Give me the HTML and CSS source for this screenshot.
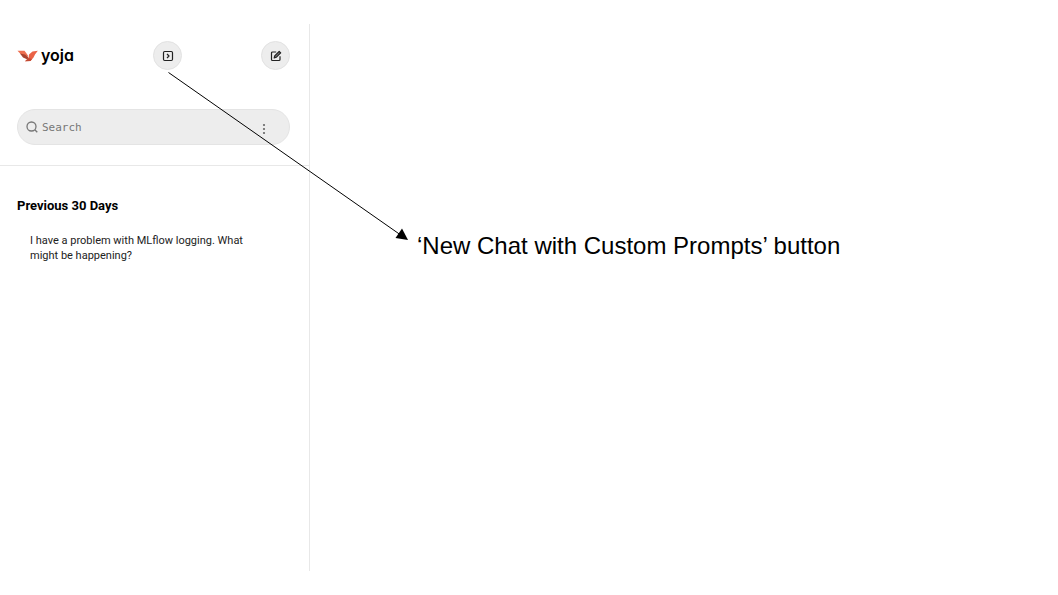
FILE: index.html
```html
<!DOCTYPE html>
<html lang="en">
<head>
<meta charset="utf-8">
<title>yoja</title>
<link rel="stylesheet" href="styles.css">
</head>
<body>
<div class="page">
  <aside class="sidebar">
    <header class="top">
      <a class="brand" href="#">
        <svg class="brand-mark" viewBox="0 0 21 12" aria-hidden="true">
          <path fill="#ee6f50" d="M.5.8H7.500L11 5.500 10 8 4 4.500z"/>
          <path fill="#a8432f" d="M3 3.500 8 4.500 11.500 7.500 10.500 9.500 6 7.500z"/>
          <path fill="#ea6246" d="M20.800.8 15.500 1.500 12 4.500 11.500 8 8 11.200 13.500 11 16.500 7.500 18 4.500z"/>
          <path fill="#c24a33" d="M11.500 8 8 11.200 13.500 11 15 9z"/>
        </svg>
        <span class="brand-name">yoja</span>
      </a>
      <button class="round" type="button" aria-label="New chat with custom prompts">
        <svg class="icon" viewBox="0 0 12 12" aria-hidden="true"><rect x="1.500" y="1.500" width="9" height="9" rx="1.200"/><path d="M5 4l2 2-2 2"/></svg>
      </button>
      <button class="round" type="button" aria-label="New chat">
        <svg class="icon" viewBox="0 0 12 12" aria-hidden="true"><path d="M6.200 2H2.500a1 1 0 0 0-1 1v6.500a1 1 0 0 0 1 1H9a1 1 0 0 0 1-1V6.200"/><path d="M4.200 8l.5-2.200L9.200 1.300l1.500 1.500-4.500 4.500z" fill="#777"/></svg>
      </button>
    </header>
    <div class="search">
      <svg class="search-icon" viewBox="0 0 12 12" aria-hidden="true"><circle cx="5.500" cy="5.500" r="4.500"/><path d="M8.800 8.800 11.300 11.300"/></svg>
      <input class="search-input" type="text" placeholder="Search" aria-label="Search">
      <button class="more" type="button" aria-label="Search options">
        <svg class="dots" viewBox="0 0 4 12" aria-hidden="true"><circle cx="2" cy="2" r="1.100"/><circle cx="2" cy="6" r="1.100"/><circle cx="2" cy="10" r="1.100"/></svg>
      </button>
    </div>
    <nav class="history">
      <h2 class="history-title">Previous 30 Days</h2>
      <a class="chat" href="#">I have a problem with MLflow logging. What might be happening?</a>
    </nav>
  </aside>
  <main class="content">
    <p class="note">‘New Chat with Custom Prompts’ button</p>
  </main>
  <svg class="arrow" width="420" height="260" viewBox="0 0 420 260" aria-hidden="true">
    <path class="arrow-line" d="M168.500 72.500 400 234.500"/>
    <path class="arrow-head" d="M408 240 395.500 238 402 228.500z"/>
  </svg>
</div>
</body>
</html>
```
FILE: styles.css
```css
* { box-sizing: border-box; }
body {
  margin: 0;
  background: #fff;
  color: #000;
  font-family: Roboto, sans-serif;
}
.page {
  position: relative;
  display: flex;
  min-height: 100vh;
  padding: 24px 0;
}
.sidebar {
  flex: 0 0 310px;
  border-right: 1px solid #e8e8e8;
}
.top {
  display: flex;
  align-items: center;
  justify-content: space-between;
  padding: 17px 19px 0 17px;
}
.brand {
  display: flex;
  align-items: center;
  gap: 3px;
  color: #000;
  text-decoration: none;
}
.brand-mark { width: 21px; height: 12px; }
.brand-name {
  padding-bottom: 2px;
  font: 600 16px/24px Inter, sans-serif;
  font-feature-settings: "cv11";
}
.round {
  display: flex;
  align-items: center;
  justify-content: center;
  width: 29px;
  height: 29px;
  padding: 0;
  border: 1px solid #e2e2e2;
  border-radius: 50%;
  background: #ededed;
}
.icon {
  width: 12px;
  height: 12px;
  fill: none;
  stroke: #222;
  stroke-width: 1.2;
  stroke-linejoin: round;
}
.search {
  display: flex;
  align-items: center;
  height: 36px;
  margin: 39px 19px 20px 17px;
  padding: 0 19px 0 8px;
  border: 1px solid #e4e4e4;
  border-radius: 18px;
  background: #ededed;
}
.search-icon {
  width: 12px;
  height: 12px;
  fill: none;
  stroke: #777;
  stroke-width: 1.3;
}
.search-input {
  flex: 1;
  min-width: 0;
  padding: 1px 0 0 4px;
  border: 0;
  outline: 0;
  background: none;
  font: 11px/16px "DejaVu Sans Mono", monospace;
}
.search-input::placeholder { color: #777; }
.more {
  display: flex;
  padding: 4px 4px 0;
  border: 0;
  background: none;
}
.dots { width: 4px; height: 12px; fill: #666; }
.history {
  padding: 32px 17px 0;
  border-top: 1px solid #e8e8e8;
}
.history-title {
  margin: 0 0 19px;
  font-size: 13px;
  line-height: 16px;
  font-weight: 700;
}
.chat {
  display: block;
  padding: 0 36px 0 13px;
  color: #222;
  font-size: 11px;
  line-height: 15px;
  text-decoration: none;
}
.content {
  flex: 1;
  padding: 208px 24px 0 107px;
}
.note {
  margin: 0;
  font: 24px/28px "Liberation Sans", Arial, sans-serif;
}
.arrow {
  position: absolute;
  top: 0;
  left: 0;
  pointer-events: none;
}
.arrow-line { fill: none; stroke: #000; stroke-width: 1; }
.arrow-head { fill: #000; }
```
